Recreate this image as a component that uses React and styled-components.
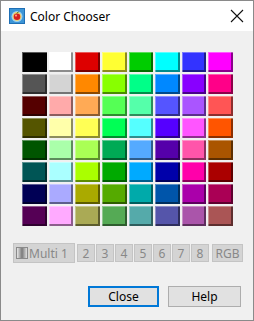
import styled, { createGlobalStyle } from "styled-components";

const GlobalStyle = createGlobalStyle`
  html, body {
    margin: 0;
    padding: 0;
    background: #ffffff;
  }
  body {
    font-family: "Noto Sans", "Open Sans", sans-serif;
  }
`;

const swatches = [
  ["#000000", "#ffffff", "#dd0000", "#ffff33", "#00cc00", "#00ffff", "#3333ff", "#ff00ff"],
  ["#555555", "#d4d4d4", "#ff8800", "#88ff00", "#00ff88", "#0088ff", "#8800ff", "#ff0088"],
  ["#550000", "#ffaaaa", "#ffaa55", "#55ff55", "#55ffaa", "#5555ff", "#aa55ff", "#ff5555"],
  ["#555500", "#ffffaa", "#ffff55", "#00ff55", "#55ffff", "#5500ff", "#ff55ff", "#ff5500"],
  ["#005500", "#aaffaa", "#aaff55", "#00aa55", "#55aaff", "#5500aa", "#ff55aa", "#aa5500"],
  ["#005555", "#aaffff", "#aaff00", "#00aa00", "#00aaff", "#0000aa", "#ff00aa", "#aa0000"],
  ["#000055", "#aaaaff", "#aaaa00", "#55aa00", "#00aaaa", "#0055aa", "#aa00aa", "#aa0055"],
  ["#550055", "#ffaaff", "#aaaa55", "#55aa55", "#55aaaa", "#5555aa", "#aa55aa", "#aa5555"],
];

const tabs = ["2", "3", "4", "5", "6", "7", "8", "RGB"];

export default function App() {
  return (
    <>
      <GlobalStyle />
      <Window>
        <TitleBar>
          <AppIcon>
            <svg width="16" height="16" viewBox="0 0 16 16">
              <rect x="0" y="0" width="16" height="16" fill="#1f6fb5" />
              <rect x="1" y="1" width="14" height="14" fill="#3c95d6" />
              <circle cx="8" cy="8.5" r="5.5" fill="#9fd0ee" />
              <circle cx="8" cy="8.5" r="4.4" fill="#f3d36a" />
              <circle cx="8" cy="8.7" r="3.3" fill="#d42020" />
              <circle cx="7" cy="7.6" r="1.1" fill="#ff9a7a" />
              <path d="M8 5.4 L9.6 3.6" stroke="#2b6e1f" strokeWidth="1" />
            </svg>
          </AppIcon>
          <Title>Color Chooser</Title>
          <CloseX>
            <svg width="14" height="14" viewBox="0 0 14 14">
              <path d="M1 1 L13 13 M13 1 L1 13" stroke="#111" strokeWidth="1.1" />
            </svg>
          </CloseX>
        </TitleBar>
        <Body>
          <Palette>
            {swatches.flat().map((c, i) => (
              <Swatch key={i} $color={c} />
            ))}
          </Palette>
          <TabRow>
            <Tab $wide>
              <TabIcon />
              Multi 1
            </Tab>
            {tabs.map((t) => (
              <Tab key={t} $rgb={t === "RGB"}>{t}</Tab>
            ))}
          </TabRow>
          <ButtonRow>
            <Button $focused>Close</Button>
            <Button>Help</Button>
          </ButtonRow>
        </Body>
      </Window>
    </>
  );
}

const Window = styled.div`
  width: 254px;
  height: 321px;
  box-sizing: border-box;
  border: 1px solid #8a8a8a;
  display: flex;
  flex-direction: column;
  background: #f0f0f0;
`;

const TitleBar = styled.div`
  height: 30px;
  background: #ffffff;
  display: flex;
  align-items: center;
  padding-left: 8px;
  padding-right: 8px;
`;

const AppIcon = styled.div`
  width: 16px;
  height: 16px;
  display: flex;
`;

const Title = styled.div`
  margin-left: 5px;
  font-size: 12px;
  color: #000;
  flex: 1;
`;

const CloseX = styled.div`
  width: 14px;
  height: 14px;
  display: flex;
  margin-right: 1px;
`;

const Body = styled.div`
  flex: 1;
  display: flex;
  flex-direction: column;
  padding: 21px 0 0 21px;
`;

const Palette = styled.div`
  width: 211px;
  display: grid;
  grid-template-columns: repeat(8, 1fr);
  grid-auto-rows: 20px;
  column-gap: 2px;
  row-gap: 2px;
`;

const Swatch = styled.div`
  background: ${(p) => p.$color};
  box-shadow: inset 1px 1px 0 rgba(255, 255, 255, 0.35),
    inset -2px -2px 0 rgba(0, 0, 0, 0.45);
`;

const TabRow = styled.div`
  margin-top: 17px;
  margin-left: -9px;
  display: flex;
  align-items: flex-end;
  gap: 1px;
`;

const Tab = styled.div`
  box-sizing: border-box;
  height: ${(p) => (p.$wide ? "20px" : "18px")};
  width: ${(p) => (p.$wide ? "62px" : p.$rgb ? "31px" : "18px")};
  margin-right: ${(p) => (p.$wide ? "1px" : "0")};
  margin-left: ${(p) => (p.$rgb ? "2px" : "0")};
  background: #d4d4d4;
  border: 1px solid #c4c4c4;
  color: #888888;
  font-size: 12px;
  display: flex;
  align-items: center;
  justify-content: ${(p) => (p.$wide ? "flex-start" : "center")};
  padding-left: ${(p) => (p.$wide ? "2px" : "0")};
  margin-bottom: ${(p) => (p.$wide ? "-1px" : "0")};
`;

const TabIcon = styled.span`
  width: 12px;
  height: 12px;
  margin-right: 1px;
  box-sizing: border-box;
  border: 1px solid #8a8a8a;
  background: linear-gradient(to right, #e8e8e8, #7a7a7a, #e0e0e0);
`;

const ButtonRow = styled.div`
  margin-top: 24px;
  margin-left: 66px;
  display: flex;
  gap: 9px;
`;

const Button = styled.div`
  box-sizing: border-box;
  width: ${(p) => (p.$focused ? "71px" : "73px")};
  height: 21px;
  background: #e1e1e1;
  border: ${(p) => (p.$focused ? "2px solid #0078d7" : "1px solid #adadad")};
  font-size: 12px;
  color: #000;
  display: flex;
  align-items: center;
  justify-content: center;
`;
